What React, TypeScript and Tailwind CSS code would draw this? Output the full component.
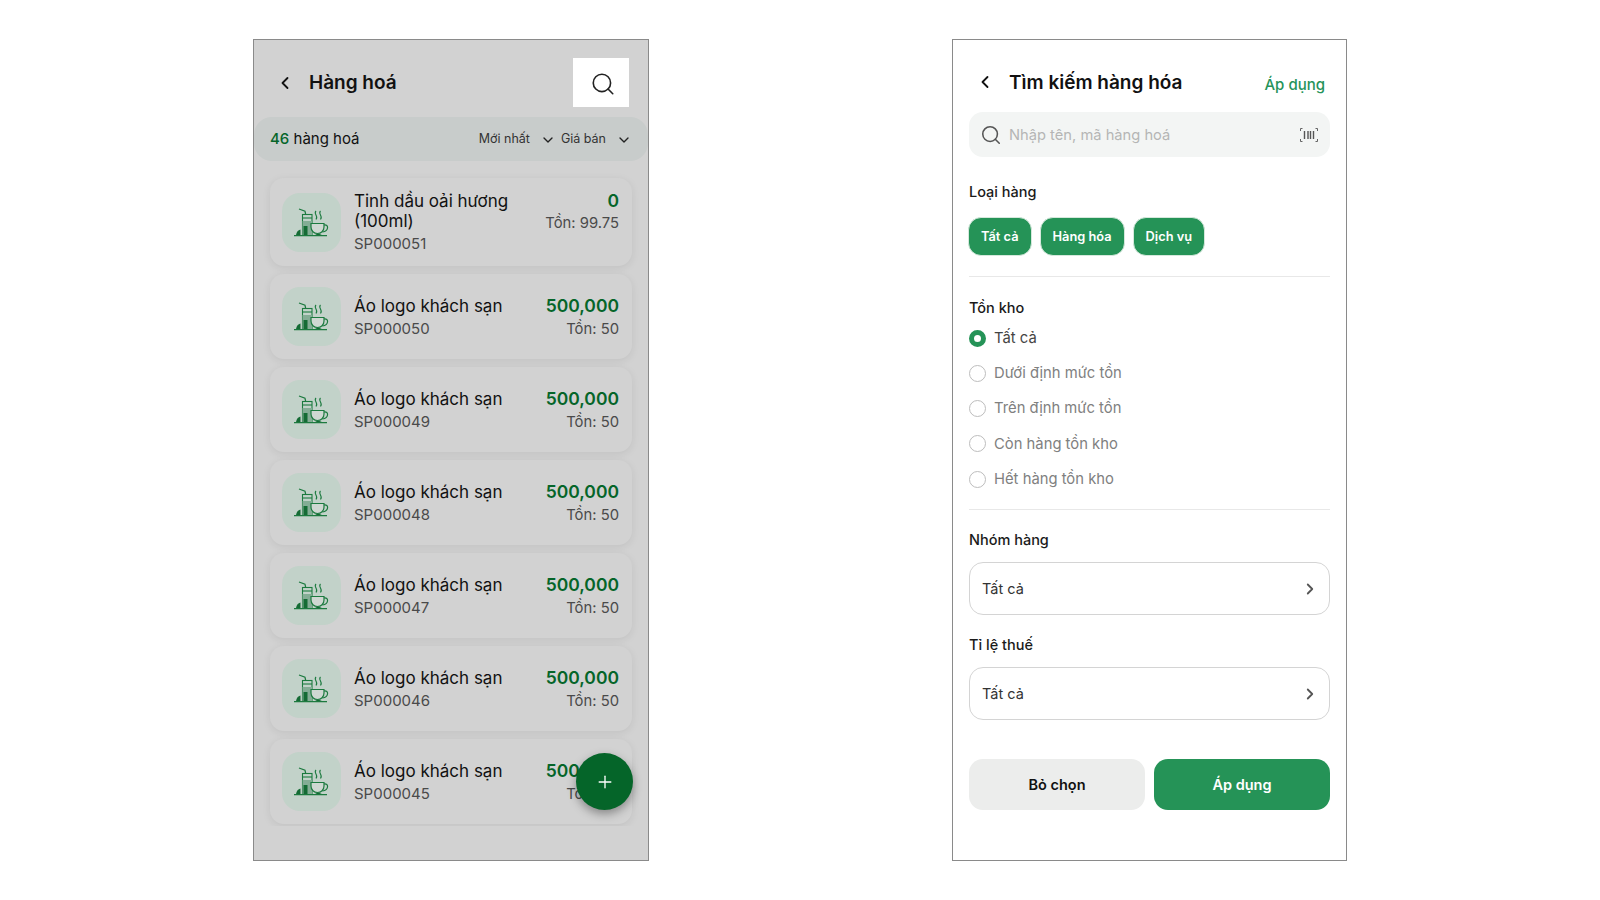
import React from 'react'
import { ChevronDown, ChevronLeft, ChevronRight, Plus, Search } from 'lucide-react'

const products = [
    { name: 'Áo logo khách sạn', code: 'SP000050' },
    { name: 'Áo logo khách sạn', code: 'SP000049' },
    { name: 'Áo logo khách sạn', code: 'SP000048' },
    { name: 'Áo logo khách sạn', code: 'SP000047' },
    { name: 'Áo logo khách sạn', code: 'SP000046' },
    { name: 'Áo logo khách sạn', code: 'SP000045' },
]

const stockOptions = ['Dưới định mức tồn', 'Trên định mức tồn', 'Còn hàng tồn kho', 'Hết hàng tồn kho']

const DrinkIcon = () => (
    <svg width="35" height="29" viewBox="0 0 35 29" fill="none" stroke="#1c7a3f" strokeWidth="1.1">
        <path d="M5 1 L11 3.3 L11.7 6.5" strokeWidth="1.2" />
        <rect x="8.5" y="6.5" width="9.5" height="20.5" fill="#c2d2c9" />
        <path d="M8.5 10 H18" />
        <rect x="8.5" y="13" width="9.5" height="14" fill="#84ad95" stroke="none" />
        <rect x="9.5" y="18" width="4" height="9" fill="#146b34" stroke="none" />
        <path d="M17 15.5 H30 V19 C30 23 27 25.5 23.5 25.5 C20 25.5 17 23 17 19 Z" fill="#cfd8d2" strokeWidth="1.2" />
        <path d="M30 17 C35 16 35 23 28.5 24" strokeWidth="1.2" />
        <path d="M22 3 C19 6 25 8 22 11.5 M26.5 3 C23.5 6 29.5 8 26.5 11.5" />
        <path d="M0 27.6 H33" strokeWidth="1.4" />
        <path d="M2 27 C2.5 24 4 22 6.5 21.5 V27 Z" fill="#146b34" stroke="none" />
        <path d="M21 27 C22 25.5 26 25.5 28 27 Z" fill="#146b34" stroke="none" />
    </svg>
)

const ProductCard = ({ name, code, price, stock }: { name: string; code: string; price: string; stock: string }) => (
    <div className="flex items-center bg-[#d2d2d2] rounded-[14px] shadow-[0_2px_8px_rgba(0,0,0,0.08)] pl-3 pr-[13px] min-h-[85px] shrink-0">
        <div className="w-[59px] h-[59px] rounded-[18px] bg-[#c2d2c9] flex items-center justify-center shrink-0">
            <DrinkIcon />
        </div>
        <div className="ml-[13px] flex-1 min-w-0">
            <div className="text-[17px] leading-[20px] mt-px text-[#111]">{name}</div>
            <div className="text-[15px] leading-[18px] mt-[4px] text-[#4a4a4a]">{code}</div>
        </div>
        <div className="text-right shrink-0 self-center">
            <div className="text-[17.5px] leading-[20px] mt-px font-semibold text-[#056529]">{price}</div>
            <div className="text-[14.8px] leading-[18px] mt-[4px] text-[#4a4a4a]">Tồn: {stock}</div>
        </div>
    </div>
)

const SelectRow = ({ label }: { label: string }) => (
    <>
        <div className="text-[14.5px] leading-[20px] font-medium text-[#1a1a1a]">{label}</div>
        <div className="mt-3 h-[53px] rounded-[14px] border border-[#d4d4d4] flex items-center justify-between pl-3 pr-[10px] text-[14.5px] text-[#333]">
            Tất cả
            <ChevronRight size={18} color="#555" strokeWidth={2.4} />
        </div>
    </>
)

export default function App() {
    return (
        <div className="min-h-[900px] bg-white pt-[39px] pl-[253px] flex gap-[303px] font-['Inter',sans-serif]">
            {/* danh sach hang hoa, dang bi lop phu man di */}
            <div className="relative w-[396px] h-[822px] border border-[#8a8a8a] bg-[#d2d2d2] overflow-hidden">
                <div className="h-[77px] pt-[8px] flex items-center pl-[21px] pr-[19px]">
                    <ChevronLeft size={20} color="#111" strokeWidth={2.2} />
                    <div className="ml-[14px] mt-px text-[19px] font-semibold text-[#111]">Hàng hoá</div>
                    <div className="ml-auto w-[56px] h-[49px] bg-white flex items-center justify-center">
                        <Search size={26} color="#222" strokeWidth={1.5} className="ml-[3px] mt-[2px]" />
                    </div>
                </div>
                <div className="h-[44px] bg-[#c8cccb] rounded-[18px] flex items-center pl-4 pr-4">
                    <div className="text-[15px] text-[#111]">
                        <span className="text-[#056529] font-medium">46</span> hàng hoá
                    </div>
                    <div className="ml-auto flex items-center mt-px text-[12.5px] text-[#333]">
                        Mới nhất
                        <ChevronDown size={16} color="#222" className="ml-[10px] mr-[5px]" />
                        Giá bán
                        <ChevronDown size={16} color="#222" className="ml-[10px]" />
                    </div>
                </div>
                <div className="h-[665px] overflow-hidden px-4 pt-[17px] flex flex-col gap-2">
                    <div className="flex items-center bg-[#d2d2d2] rounded-[14px] shadow-[0_2px_8px_rgba(0,0,0,0.08)] pl-3 pr-[13px] h-[88px] shrink-0">
                        <div className="w-[59px] h-[59px] rounded-[18px] bg-[#c2d2c9] flex items-center justify-center shrink-0">
                            <DrinkIcon />
                        </div>
                        <div className="ml-[13px] flex-1 min-w-0">
                            <div className="text-[17px] leading-[20px] text-[#111]">Tinh dầu oải hương<br />(100ml)</div>
                            <div className="text-[15px] leading-[18px] mt-[4px] text-[#4a4a4a]">SP000051</div>
                        </div>
                        <div className="text-right shrink-0 self-start pt-[13px]">
                            <div className="text-[17.5px] leading-[20px] font-semibold text-[#056529]">0</div>
                            <div className="text-[14.8px] leading-[18px] mt-[3px] text-[#4a4a4a]">Tồn: 99.75</div>
                        </div>
                    </div>
                    {products.map((p) => (
                        <ProductCard key={p.code} name={p.name} code={p.code} price="500,000" stock="50" />
                    ))}
                </div>
                <div className="absolute left-[322px] top-[713px] w-[57px] h-[57px] rounded-full bg-[#056529] shadow-[0_4px_10px_rgba(0,0,0,0.35)] flex items-center justify-center">
                    <Plus size={20} color="#fff" strokeWidth={1.6} />
                </div>
            </div>

            {/* tim kiem hang hoa */}
            <div className="w-[395px] h-[822px] border border-[#8a8a8a] bg-white px-4">
                <div className="h-[72px] pt-3 flex items-center">
                    <ChevronLeft size={20} color="#111" strokeWidth={2.2} className="ml-[6px]" />
                    <div className="ml-[14px] mt-[2px] text-[19px] font-semibold text-[#111]">Tìm kiếm hàng hóa</div>
                    <div className="ml-auto mr-[5px] mt-[7px] text-[15px] font-medium text-[#25935a]">Áp dụng</div>
                </div>
                <div className="h-[45px] bg-[#f3f5f4] rounded-[14px] flex items-center pl-[11px] pr-[12px]">
                    <Search size={22} color="#555" strokeWidth={1.7} />
                    <div className="ml-[7px] mt-px text-[14.7px] text-[#b5b5b5]">Nhập tên, mã hàng hoá</div>
                    <svg className="ml-auto" width="18" height="14" viewBox="0 0 18 14" fill="none" stroke="#555">
                        <path d="M2.5 .5 H.5 V3 M15.5 .5 H17.5 V3 M.5 11 V13.5 H2.5 M17.5 11 V13.5 H15.5" strokeWidth=".9" />
                        <path d="M4.5 3 V11 M8 3 V11 M10.5 3 V11 M13.5 3 V11" strokeWidth="1.4" />
                    </svg>
                </div>
                <div className="mt-[25px] text-[14.5px] leading-[20px] font-medium text-[#1a1a1a]">Loại hàng</div>
                <div className="mt-[15px] flex gap-2 -ml-px">
                    {['Tất cả', 'Hàng hóa', 'Dịch vụ'].map((t) => (
                        <div key={t} className="h-[39px] px-3 rounded-[13px] bg-[#259357] border border-[#d5e8dc] flex items-center text-[12.8px] font-semibold text-white">
                            {t}
                        </div>
                    ))}
                </div>
                <div className="mt-5 h-px bg-[#e8e8e8]" />
                <div className="mt-[21px] text-[14.5px] leading-[20px] font-medium text-[#1a1a1a]">Tồn kho</div>
                <div className="mt-[10px] flex items-center gap-2 h-[20px]">
                    <div className="w-[17px] h-[17px] rounded-full border-[5px] border-[#259357] bg-white" />
                    <div className="text-[14.8px] text-[#444]">Tất cả</div>
                </div>
                <div className="mt-[15px] flex flex-col gap-[15px]">
                    {stockOptions.map((o) => (
                        <div key={o} className="flex items-center gap-2 h-[20.3px]">
                            <div className="w-[17px] h-[17px] rounded-full border-[1.5px] border-[#bdbdbd]" />
                            <div className="text-[14.8px] text-[#808080]">{o}</div>
                        </div>
                    ))}
                </div>
                <div className="mt-5 h-px bg-[#e8e8e8]" />
                <div className="mt-5">
                    <SelectRow label="Nhóm hàng" />
                </div>
                <div className="mt-5">
                    <SelectRow label="Tỉ lệ thuế" />
                </div>
                <div className="mt-[39px] flex gap-[9px]">
                    <button className="flex-1 h-[51px] rounded-[14px] bg-[#ecedec] text-[14.5px] font-semibold text-[#111]">Bỏ chọn</button>
                    <button className="flex-1 h-[51px] rounded-[14px] bg-[#259357] text-[14.5px] font-semibold text-white">Áp dụng</button>
                </div>
            </div>
        </div>
    )
}
